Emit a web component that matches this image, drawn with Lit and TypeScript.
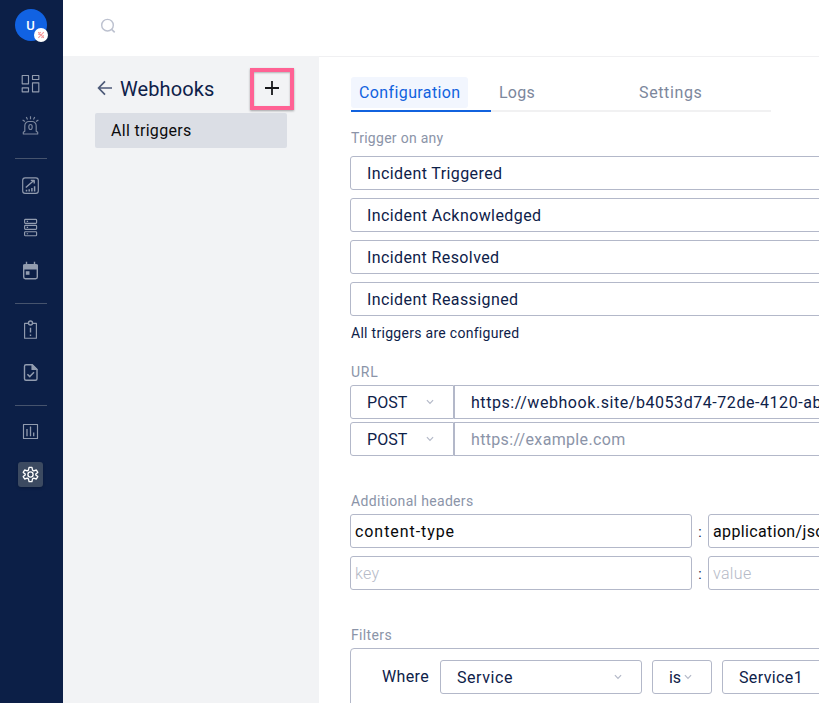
import { LitElement, html, svg, css, nothing } from "lit";
import { customElement, property } from "lit/decorators.js";
import { classMap } from "lit/directives/class-map.js";

/** A run of text tracked out to a given advance width. */
@customElement("tracked-text")
class TrackedText extends LitElement {
  @property() text = "";
  @property({ type: Number }) width = 0;

  static styles = css`
    :host { display: inline-block; white-space: pre; }
    .run { display: inline-block; }
  `;

  render() {
    return html`<span class="run">${this.text}</span>`;
  }

  updated() {
    const run = this.renderRoot.querySelector<HTMLElement>(".run");
    if (!run || !this.width) return;
    run.style.letterSpacing = "0px";
    const natural = run.getBoundingClientRect().width;
    run.style.letterSpacing = `${(this.width - natural) / this.text.length}px`;
  }
}

const t = (text: string, width: number) =>
  html`<tracked-text .text=${text} .width=${width}></tracked-text>`;

const icons = {
  dashboard: svg`<path d="M4.2 4.5h6.3v8.3H4.2zM14.5 4.5h6.3v4h-6.3zM4.2 16.8h6.3v4H4.2zM14.5 11.8h6.3v9h-6.3z"/>`,
  siren: svg`<g opacity=".85"><path d="M6.8 18.3v-5.6c0-2.4 2-4.2 4-4.2h3.4c2 0 4 1.8 4 4.2v5.6l1.5 1V21H5.3v-1.7zM12.5 3.3v3M8.3 4l1.2 2.5M16.7 4l-1.2 2.5M4.6 7l2.4 1.6M20.4 7L18 8.6"/><ellipse cx="12.5" cy="14" rx="1.7" ry="2.5"/></g>`,
  chart: svg`<rect x="4.7" y="4.8" width="15.6" height="15.6" rx="2.4"/><path d="M7.8 14.5l8-7M12.8 7.4h3.4v3.2" stroke-width="1.4"/><path d="M8.5 18.4v-1.6M11.2 18.4v-2.2M13.9 18.4v-3.4M16.6 18.4v-5.2" stroke-width="1.5"/>`,
  servers: svg`<rect x="6.6" y="4.4" width="12" height="4" rx=".8"/><rect x="6.6" y="10.4" width="12" height="4" rx=".8"/><rect x="6.6" y="16.7" width="12" height="4" rx=".8"/><path d="M8.7 6.4h1.4M8.7 12.4h1.4M8.7 18.7h1.4"/>`,
  calendar: svg`<rect x="5.7" y="6.7" width="13.6" height="14" rx="1.6" stroke-width="1.4"/><path d="M5.7 7h13.6v4H5.7z" fill="currentColor"/><path d="M8.5 3.7v3M16.5 3.7v3" stroke-width="1.4"/><path d="M7.8 13.2h3.7v3.6H7.8z" fill="currentColor" stroke="none"/>`,
  clipboard: svg`<path d="M10 6.3H6.6v14.9h11.8V6.3H15"/><circle cx="12.5" cy="6" r="2" stroke-width="1.4"/><path d="M12.5 10.8v4.7M12.5 17.4v1.6" stroke-width="1.4"/>`,
  document: svg`<path d="M14.3 4.7H8c-.9 0-1.5.6-1.5 1.5v12.6c0 .9.6 1.5 1.5 1.5h9.5c.9 0 1.5-.6 1.5-1.5V9.4z" stroke-width="1.4"/><path d="M14 4.7v4.8h5z" fill="currentColor"/><path d="M9.4 14.2l2.4 2.4 4.2-4.3" stroke-width="1.5"/>`,
  bars: svg`<rect x="5.5" y="5.5" width="14" height="14"/><path d="M9 9.9v7.4M12.5 7.6v9.7M15.7 13.4v3.9" stroke-width="1.3"/>`,
  gear: svg`<g transform="translate(12.5 12.5) scale(.79) translate(-12 -12)"><path stroke-width="1.7" d="M9.4 6.5L10.2 3h3.6l.8 3.5 1.5.9 3.3-1.1 1.8 3.1-2.5 2.1v1l2.5 2.1-1.8 3.1-3.3-1.1-1.5.9-.8 3.5h-3.6l-.8-3.5-1.5-.9-3.3 1.1-1.8-3.1 2.5-2.1v-1L2.8 9.4l1.8-3.1 3.3 1.1z"/><circle cx="12" cy="12" r="3.3" stroke-width="1.7"/></g>`,
};

type NavEntry = { icon?: keyof typeof icons; label?: string; gap: number; active?: boolean };

const NAV: NavEntry[] = [
  { icon: "dashboard", label: "Dashboard", gap: 30 },
  { icon: "siren", label: "Incidents", gap: 17 },
  { gap: 20 },
  { icon: "chart", label: "Analytics", gap: 14 },
  { icon: "servers", label: "Services", gap: 17 },
  { icon: "calendar", label: "Schedules", gap: 18 },
  { gap: 20 },
  { icon: "clipboard", label: "Postmortems", gap: 13 },
  { icon: "document", label: "Runbooks", gap: 18 },
  { gap: 20 },
  { icon: "bars", label: "Reports", gap: 13 },
  { icon: "gear", label: "Settings", gap: 18, active: true },
];

@customElement("nav-rail")
class NavRail extends LitElement {
  static styles = css`
    :host {
      display: flex; flex-direction: column; align-items: center;
      box-sizing: border-box; width: 63px; padding: 9px 2px 0 0;
      background: #0c1f47; color: #929caf;
    }
    .avatar {
      position: relative; flex: none; width: 32px; height: 32px; border-radius: 50%;
      background: #1162e2; color: #fff; display: grid; place-items: center;
      font: 500 13px/1 Roboto, sans-serif;
    }
    .badge {
      position: absolute; left: 19px; top: 19px; width: 14px; height: 14px;
      border-radius: 50%; background: #fff;
    }
    .badge svg { display: block; }
    .item { flex: none; display: block; width: 25px; height: 25px; border-radius: 3px; }
    .item svg { display: block; }
    .active { background: #3c4a61; color: #fff; box-shadow: 0 1px 3px #0003; }
    .rule { flex: none; width: 32px; height: 1px; background: #46536d; }
  `;

  render() {
    return html`
      <div class="avatar">U
        <span class="badge">
          <svg width="14" height="14" fill="none" stroke="#f69a9c" stroke-width="1.1">
            <path d="M4.3 4.2l5.5 5.6M9.8 4.2L4.3 9.8M6.8 4.2L4.3 6.5M7.4 9.8l2.4-2.4" />
            <path d="M4.6 4v1.4M9.5 8.6V10" stroke-width="1" />
          </svg>
        </span>
      </div>
      ${NAV.map((n) =>
        n.icon
          ? html`<a class=${classMap({ item: true, active: !!n.active })}
              aria-label=${n.label ?? nothing} style="margin-top:${n.gap}px">
              <svg width="25" height="25" viewBox="0 0 25 25" fill="none"
                stroke="currentColor" stroke-width="1.15" stroke-linejoin="round">${icons[n.icon]}</svg>
            </a>`
          : html`<div class="rule" style="margin-top:${n.gap}px"></div>`
      )}
    `;
  }
}

const chevron = html`<svg class="chevron" width="8" height="6" viewBox="0 0 8 6" fill="none"
  stroke="#b4b9c8" stroke-width="1.2"><path d="M.9 1.2L4 4.3l3.1-3.1" /></svg>`;

const TRIGGERS: [string, number][] = [
  ["Incident Triggered", 135.5],
  ["Incident Acknowledged", 174.5],
  ["Incident Resolved", 132.5],
  ["Incident Reassigned", 151.5],
];

@customElement("app-root")
class AppRoot extends LitElement {
  static styles = css`
    :host {
      display: flex; width: 100%; height: 703px; overflow: hidden; background: #fff;
      font: 400 16px/20px Roboto, sans-serif; color: #0e2149;
    }
    nav-rail { flex: none; }
    .page { flex: 1; min-width: 0; display: flex; flex-direction: column; }
    .topbar { flex: none; height: 56px; box-sizing: border-box; padding: 18px 37px; }
    .topbar svg { display: block; }
    .body { flex: 1; min-height: 0; display: flex; }
    .panel {
      flex: none; width: 256px; box-sizing: border-box; padding: 12px 25px 0 32px;
      background: #f2f3f5;
    }
    .panel-head { display: flex; align-items: center; height: 42px; }
    .panel-head .back { flex: none; display: block; margin: 0 7px 2px 2px; }
    .title { font-size: 20px; line-height: 24px; }
    .add {
      box-sizing: border-box; width: 44px; height: 42px; margin-left: auto;
      border: 4px solid #ff6294; display: grid; place-items: center;
      box-shadow: 0 1px 2px #0005, inset 0 1px 2px #0004;
    }
    .add svg { display: block; margin-bottom: 2px; }
    .trigger {
      height: 35px; width: 192px; margin-top: 3px; box-sizing: border-box; padding-left: 16px;
      border-radius: 2px; background: #dbdee5; color: #0b0b0c; display: flex; align-items: center;
    }
    .content {
      flex: 1; min-width: 0; overflow: hidden; box-sizing: border-box;
      border-top: 1px solid #f0f0f2; padding: 20px 0 0 31px;
    }
    .inner { width: 600px; }
    .tabs {
      display: grid; grid-template-columns: repeat(3, 140px); width: 420px;
      margin-left: 1px; height: 35px; color: #7c879c;
    }
    .tab { border-bottom: 2px solid #f1f1f2; padding-left: 8px; line-height: 31px; }
    .tab.on { padding-left: 0; border-color: #1162de; color: #1162de; }
    .pill { display: block; width: 109px; height: 31px; padding-left: 8px; border-radius: 3px; background: #f2f6fe; }
    .label { font-size: 14px; line-height: 18px; padding-left: 1px; color: #8b94a8; }
    .l-trigger { margin-top: 17px; }
    .stack { display: grid; gap: 8px; }
    .l-trigger + .stack { margin-top: 9px; }
    .box {
      box-sizing: border-box; height: 34px; border: 1px solid #b3b8c9; border-radius: 3px;
      background: #fff; display: flex; align-items: center; padding-left: 16px;
    }
    .box tracked-text { padding-top: 2px; }
    .note { margin: 8px 0 0 1px; font-size: 14px; line-height: 18px; }
    .l-url { margin: 21px 0 4px; }
    .urls { display: grid; gap: 3px; }
    .url { display: flex; }
    .method { width: 104px; border-radius: 3px 0 0 3px; justify-content: space-between; padding-right: 19px; }
    .address { flex: 1; border-radius: 0; }
    .muted { color: #8b94a8; }
    .l-headers { margin: 36px 0 4px; }
    .header { display: grid; grid-template-columns: 342px 16px 1fr; align-items: center; }
    .header .box { padding-left: 4px; color: #08090b; }
    .header .hint { color: #b5bac7; font-weight: 300; }
    .colon { text-align: center; font-size: 14px; line-height: 20px; padding-top: 1px; }
    .l-filters { margin: 36px 0 4px; }
    .filters {
      box-sizing: border-box; height: 120px; border: 1px solid #b3b8c9; border-radius: 4px;
      padding: 11px 0 0 31px; display: flex; align-items: flex-start;
    }
    .where { width: 58px; line-height: 34px; }
    .field { width: 202px; justify-content: space-between; padding-right: 19px; margin-right: 10px; }
    .op { width: 60px; gap: 3px; margin-right: 10px; }
    .value { flex: 1; }
    .chevron { display: block; flex: none; }
  `;

  render() {
    return html`
      <nav-rail></nav-rail>
      <div class="page">
        <header class="topbar">
          <svg width="16" height="16" viewBox="0 0 16 16" fill="none" stroke="#bcc1cf" stroke-width="1.4">
            <circle cx="7.5" cy="7.2" r="5.8" /><path d="M11.6 11.4l3.1 3" stroke-width="1.6" />
          </svg>
        </header>
        <div class="body">
          <aside class="panel">
            <div class="panel-head">
              <svg class="back" width="16" height="16" viewBox="0 0 16 16" fill="none" stroke="#4d5a78" stroke-width="1.7">
                <path d="M15 8H2M8 1.4L1.6 8 8 14.6" />
              </svg>
              <span class="title">${t("Webhooks", 94.5)}</span>
              <div class="add">
                <svg width="14" height="14" stroke="#17181b" stroke-width="1.8"><path d="M7 0v14M0 7h14" /></svg>
              </div>
            </div>
            <div class="trigger">${t("All triggers", 80.5)}</div>
          </aside>
          <main class="content">
            <div class="inner">
              <div class="tabs">
                <div class="tab on"><span class="pill">${t("Configuration", 101)}</span></div>
                <div class="tab">${t("Logs", 36)}</div>
                <div class="tab">${t("Settings", 63.5)}</div>
              </div>

              <div class="label l-trigger">${t("Trigger on any", 92.5)}</div>
              <div class="stack">
                ${TRIGGERS.map(([name, w]) => html`<div class="box">${t(name, w)}</div>`)}
              </div>
              <div class="note">${t("All triggers are configured", 168)}</div>

              <div class="label l-url">${t("URL", 27.5)}</div>
              <div class="urls">
                <div class="url">
                  <div class="box method">${t("POST", 40.5)}${chevron}</div>
                  <div class="box address">${t("https://webhook.site/b4053d74-72de-4120-ab", 351)}</div>
                </div>
                <div class="url">
                  <div class="box method">${t("POST", 40.5)}${chevron}</div>
                  <div class="box address muted">${t("https://example.com", 154.5)}</div>
                </div>
              </div>

              <div class="label l-headers">${t("Additional headers", 122.5)}</div>
              <div class="stack">
                <div class="header">
                  <div class="box">${t("content-type", 100)}</div>
                  <span class="colon">:</span>
                  <div class="box">${t("application/json", 121)}</div>
                </div>
                <div class="header">
                  <div class="box hint">${t("key", 24.5)}</div>
                  <span class="colon">:</span>
                  <div class="box hint">${t("value", 38.5)}</div>
                </div>
              </div>

              <div class="label l-filters">${t("Filters", 41)}</div>
              <div class="filters">
                <span class="where">${t("Where", 47)}</span>
                <div class="box field">${t("Service", 56)}${chevron}</div>
                <div class="box op">${t("is", 12)}${chevron}</div>
                <div class="box value">${t("Service1", 64)}</div>
              </div>
            </div>
          </main>
        </div>
      </div>
    `;
  }
}
